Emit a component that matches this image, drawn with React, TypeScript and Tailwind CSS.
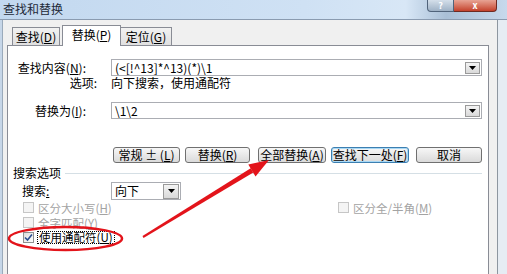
import React from 'react';

const font = "font-['SimSun','Noto_Sans_CJK_SC',sans-serif]";

function DropBtn({ big }: { big?: boolean }) {
	return (
		<div
			className={`${big ? 'w-[16px] h-[15px]' : 'w-[15px] h-[12px]'} mr-[1px] border border-[#9a9a9a] bg-gradient-to-b from-[#f4f4f4] to-[#d9d9d9] flex items-center justify-center`}
		>
			<svg width="7" height="4" viewBox="0 0 7 4">
				<polygon points="0,0 7,0 3.5,4" fill="#000" />
			</svg>
		</div>
	);
}

function Combo({ value }: { value: string }) {
	return (
		<div className="w-[371px] h-[17px] border border-[#abadb3] bg-white flex items-center">
			<span className="flex-1 pl-[3px] whitespace-pre">{value}</span>
			<DropBtn />
		</div>
	);
}

function Btn({ children, w, focused, ml }: { children: React.ReactNode; w: string; focused?: boolean; ml: string }) {
	return (
		<div
			className={`${w} ${ml} h-[16px] rounded-[3px] border ${
				focused ? 'border-[#3c7fb1] shadow-[inset_0_0_0_1px_#a8d8f5]' : 'border-[#707070]'
			} bg-gradient-to-b from-[#f7f7f7] to-[#dadada] flex items-center justify-center whitespace-nowrap`}
		>
			{children}
		</div>
	);
}

function Check({ label, checked, disabled }: { label: React.ReactNode; checked?: boolean; disabled?: boolean }) {
	return (
		<div className="flex items-center">
			<div
				className={`w-[11px] h-[11px] border ${
					disabled ? 'border-[#c6c6c6] bg-[#f4f4f4]' : 'border-[#8e8f8f] bg-gradient-to-br from-[#dcdcdc] to-white'
				} flex items-center justify-center`}
			>
				{checked && (
					<svg width="9" height="9" viewBox="0 0 9 9">
						<path d="M1 4.5 L3.5 7 L8 1.5" stroke="#2a4d8f" strokeWidth="1.6" fill="none" />
					</svg>
				)}
			</div>
			<span
				className={`ml-[3px] px-[1px] text-[11.5px] ${disabled ? 'text-[#a3a3a3]' : 'text-black'} ${
					checked ? 'border border-dotted border-black leading-[11px]' : 'leading-[12px]'
				}`}
			>
				{label}
			</span>
		</div>
	);
}

export default function App() {
	return (
		<div className={`relative w-[507px] h-[274px] overflow-hidden bg-[#e9eef4] text-[12px] leading-[14px] text-black ${font}`}>
			{/* title bar */}
			<div className="h-[19px] flex items-start bg-[linear-gradient(90deg,#c2d8ef_0%,#cfe1f4_60%,#d8e7f6_80%,#a9bfd6_88%,#c7d9ec_100%)]">
				<span className="pl-[3px] pt-[2px] text-[12px] text-[#1e2a38]">查找和替换</span>
				<div className="flex-1" />
				<div className="flex mr-[10px]">
					<div className="w-[27px] h-[12px] border border-[#50637a] border-t-0 rounded-bl-[4px] bg-gradient-to-b from-[#d4dfea] to-[#9fb2c6] flex items-center justify-center text-[9px] leading-[9px] font-bold text-white">
						?
					</div>
					<div className="w-[43px] h-[12px] border border-[#6e2a22] border-t-0 border-l-0 rounded-br-[4px] bg-gradient-to-b from-[#e7a394] to-[#c3402b] flex items-center justify-center text-[9px] leading-[9px] font-bold text-white">
						x
					</div>
				</div>
			</div>

			{/* body */}
			<div className="flex h-[255px] border-t border-[#8a9bb0]">
				<div className="w-[3px] bg-[#c6d6e8] border-r border-[#9aaabb]" />
				<div className="w-[495px] bg-[#f0f0f0] border-r border-[#8d96a0] flex flex-col pl-[4px]">
					{/* tabs */}
					<div className="flex items-end h-[25px] pl-[5px] relative z-10">
						<div className="w-[48px] h-[18px] border border-b-0 border-[#898c95] bg-gradient-to-b from-[#f2f2f2] to-[#e0e0e0] flex items-center justify-center">
							查找(<u>D</u>)
						</div>
						<div className="w-[59px] h-[21px] ml-[2px] border border-b-0 border-[#898c95] bg-white flex items-start pt-[2px] justify-center translate-y-[1px]">
							替换(<u>P</u>)
						</div>
						<div className="w-[51px] h-[18px] border border-b-0 border-l-0 border-[#898c95] bg-gradient-to-b from-[#f2f2f2] to-[#e0e0e0] flex items-center justify-center">
							定位(<u>G</u>)
						</div>
					</div>

					{/* panel */}
					<div className="w-[482px] flex-1 border border-b-0 border-[#898c95] bg-white flex flex-col">
						<div className="mt-[13px] flex items-center h-[17px]">
							<div className="w-[103px] text-right pr-[25px]">
								查找内容(<u>N</u>):
							</div>
							<Combo value="(<[!^13]*^13)(*)\1" />
						</div>
						<div className="flex items-center h-[14px]">
							<div className="w-[103px] text-right pr-[14px]">选项:</div>
							<span>向下搜索，使用通配符</span>
						</div>
						<div className="mt-[12px] flex items-center h-[17px]">
							<div className="w-[103px] text-right pr-[25px]">
								替换为(<u>I</u>):
							</div>
							<Combo value="\1\2" />
						</div>

						<div className="mt-[28px] flex">
							<Btn w="w-[67px]" ml="ml-[105px]">
								常规 ± (<u>L</u>)
							</Btn>
							<Btn w="w-[65px]" ml="ml-[5px]">
								替换(<u>R</u>)
							</Btn>
							<Btn w="w-[68px]" ml="ml-[8px]">
								全部替换(<u>A</u>)
							</Btn>
							<Btn w="w-[78px]" ml="ml-[5px]" focused>
								查找下一处(<u>F</u>)
							</Btn>
							<Btn w="w-[66px]" ml="ml-[7px]">
								取消
							</Btn>
						</div>

						<div className="mt-[3px] h-[14px] flex items-center pl-[5px] pr-[6px]">
							<span>搜索选项</span>
							<div className="flex-1 ml-[4px] border-t border-[#d5dfe5]" />
						</div>

						<div className="mt-[2px] h-[18px] flex items-center">
							<div className="w-[103px] pl-[14px]">
								搜索<u>:</u>
							</div>
							<div className="w-[70px] h-[18px] border border-[#abadb3] bg-white flex items-center">
								<span className="flex-1 pl-[3px]">向下</span>
								<DropBtn big />
							</div>
						</div>

						<div className="h-[15px] flex items-center pl-[15px]">
							<div className="w-[315px]">
								<Check disabled label={<>区分大小写(<u>H</u>)</>} />
							</div>
							<Check disabled label={<>区分全/半角(<u>M</u>)</>} />
						</div>
						<div className="h-[15px] flex items-center pl-[15px]">
							<Check disabled label={<>全字匹配(<u>Y</u>)</>} />
						</div>
						<div className="h-[15px] flex items-center pl-[15px]">
							<Check checked label={<>使用通配符(<u>U</u>)</>} />
						</div>
					</div>
				</div>
				<div className="flex-1 bg-[#e6ecf3]" />
			</div>

			{/* red annotation */}
			<svg className="absolute inset-0 pointer-events-none" width="507" height="274" viewBox="0 0 507 274">
				<ellipse cx="65.5" cy="238.5" rx="56.5" ry="11.5" fill="none" stroke="#e3141b" strokeWidth="2.5" />
				<polygon points="143.5,237.9 142.5,236.1 250.7,168.3 253.3,172.5" fill="#e3141b" />
				<polygon points="269,160 255.5,176.4 248.3,164.4" fill="#e3141b" />
			</svg>
		</div>
	);
}
